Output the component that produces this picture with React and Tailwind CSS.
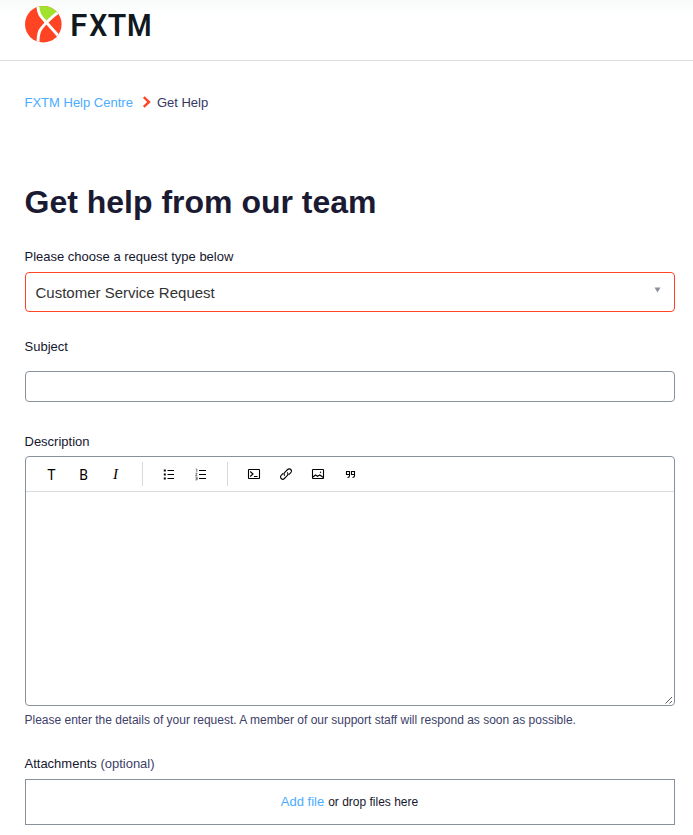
import React from "react";

function Logo() {
  return (
    <svg width="136" height="44" viewBox="0 0 136 44" className="block" role="img" aria-label="FXTM">
      <defs>
        <clipPath id="disc">
          <circle cx="18.3" cy="24.2" r="18.3" />
        </clipPath>
      </defs>
      <g clipPath="url(#disc)">
        <rect width="37" height="44" fill="#ff4423" />
        <path d="M13 4 C13 13 16 17 22 22 C25 18 29 15 34 13.5 L30 4 Z" fill="#a0e22d" />
        <path d="M12.8 4 C12.8 14 15.5 16.5 21.5 22.5 L33.5 36" fill="none" stroke="#fff" strokeWidth="2.9" />
        <path d="M35.5 11 C29.5 14.5 25 19 21.5 22.5 C15.5 29 13 30 13 44" fill="none" stroke="#fff" strokeWidth="2.9" />
      </g>
      <g fontSize="31.5" fontWeight="600" fill="#101820" className="font-['Roboto',sans-serif]">
        <text x="45.3" y="35.5" textLength="17" lengthAdjust="spacingAndGlyphs">F</text>
        <text x="64.3" y="35.5" textLength="18" lengthAdjust="spacingAndGlyphs">X</text>
        <text x="82.8" y="35.5" textLength="18.5" lengthAdjust="spacingAndGlyphs">T</text>
        <text x="102" y="35.5" textLength="24.6" lengthAdjust="spacingAndGlyphs">M</text>
      </g>
    </svg>
  );
}

function ToolButton({ children }) {
  return <button className="flex h-8 w-8 shrink-0 items-center justify-center text-black">{children}</button>;
}

function Glyph({ children }) {
  return (
    <svg width="16" height="16" viewBox="0 0 16 16" fill="none" stroke="currentColor" strokeWidth="1.1">
      {children}
    </svg>
  );
}

function Toolbar() {
  return (
    <div className="flex h-[35px] shrink-0 items-center border-b border-[#d8dcde] pl-[10px]">
      <ToolButton><span className="pr-px pt-[2px] font-['Roboto',sans-serif] text-[14px]">T</span></ToolButton>
      <ToolButton><span className="pr-px pt-[2px] font-['Roboto',sans-serif] text-[14px]">B</span></ToolButton>
      <ToolButton><span className="pr-px pt-px font-['Liberation_Serif',serif] text-[15px] italic">I</span></ToolButton>
      <div className="ml-[10px] mr-[10px] h-6 w-px bg-[#d8dcde]" />
      <ToolButton>
        <Glyph>
          <path d="M6.5 4.5H13M6.5 8.5H13M6.5 12.5H13" />
          <path d="M2.8 4.5h2M2.8 8.5h2M2.8 12.5h2" strokeWidth="1.9" />
        </Glyph>
      </ToolButton>
      <ToolButton>
        <Glyph>
          <path d="M6 4.5h7M6 8.5h7M6 12.5h7" />
          <path d="M2.8 3h1v3M2.4 7.2h1.8L2.5 9.7h2M2.4 11.2h1.8v2.7H2.4M2.8 12.6h1.4" strokeWidth=".5" />
        </Glyph>
      </ToolButton>
      <div className="ml-[10px] mr-[10px] h-6 w-px bg-[#d8dcde]" />
      <ToolButton>
        <Glyph>
          <rect x="2.5" y="3.5" width="11" height="9" rx=".5" />
          <path d="M4.2 5.5 7 8l-2.8 2.5M8 10.5h3.5" />
        </Glyph>
      </ToolButton>
      <ToolButton>
        <Glyph>
          <path d="M6.8 9.7a2.4 2.4 0 0 1 0-3.4l2.8-2.8a2.2 2.2 0 0 1 3.2 3.2l-2.2 2.2" />
          <path d="M9.2 6.3a2.4 2.4 0 0 1 0 3.4l-2.8 2.8a2.2 2.2 0 0 1-3.2-3.2l2.2-2.2" />
        </Glyph>
      </ToolButton>
      <ToolButton>
        <Glyph>
          <rect x="2.5" y="3.5" width="11" height="9" rx=".5" />
          <path d="m3 11 2.5-2 2 1.3L9.8 9l3.2 2.3" />
          <circle cx="10.5" cy="6.3" r=".7" fill="currentColor" stroke="none" />
        </Glyph>
      </ToolButton>
      <ToolButton>
        <Glyph>
          <path d="M7.5 8.5H4.5v-3h3v4.3q0 1.7-2 1.7M12.5 8.5h-3v-3h3v4.3q0 1.7-2 1.7" />
        </Glyph>
      </ToolButton>
    </div>
  );
}

export default function App() {
  return (
    <div className="h-[835px] w-full overflow-hidden bg-white font-['Liberation_Sans',Arial,sans-serif] text-[13px] text-[#15172e]">
      <header className="h-[61px] border-b border-[#dddddd] bg-linear-to-b from-[#f8fbfb] to-white to-25% pl-[25px]">
        <Logo />
      </header>
      <main className="flex flex-col pl-[25px] pr-[18px]">
        <nav className="-ml-[0.5px] mt-[32px] flex h-5 items-center leading-5">
          <a className="text-[#4bacfe]">FXTM Help Centre</a>
          <svg width="9" height="12" viewBox="0 0 9 12" className="mb-[3px] ml-[9.5px] mr-[5.5px]">
            <path d="M1.8 1.2 7 6l-5.2 4.8" fill="none" stroke="#ff4423" strokeWidth="2.4" />
          </svg>
          <span className="text-[#36365f]">Get Help</span>
        </nav>
        <h1 className="-ml-[0.5px] mt-[69px] h-10 text-[32px] font-bold leading-10 text-[#1a1a33]">Get help from our team</h1>
        <label className="-ml-[0.5px] mt-[25px] h-5 leading-5">Please choose a request type below</label>
        <div className="mt-[5px] flex h-10 items-center justify-between rounded-[4px] border border-[#ff4423] pl-[9.5px] pr-[13px]">
          <span className="pt-[2px] text-[15px] text-[#333333]">Customer Service Request</span>
          <svg width="7" height="6" viewBox="0 0 7 6" className="mb-[4px]">
            <path d="M.5.5h6L3.5 5.5z" fill="#8c929c" />
          </svg>
        </div>
        <label className="-ml-[0.5px] mt-[25px] h-5 leading-5">Subject</label>
        <input className="mt-[14px] h-[31px] rounded-[4px] border border-[#87929d] outline-none" />
        <label className="-ml-[0.5px] mt-[30px] h-5 leading-5">Description</label>
        <div className="mt-[4px] flex h-[250px] flex-col rounded-[4px] border border-[#87929d]">
          <Toolbar />
          <div className="flex flex-1 items-end justify-end">
            <svg width="10" height="10" viewBox="0 0 10 10" fill="none" stroke="#555" strokeWidth="1">
              <path d="M1.5 8.5 8 2M5.5 8.5 8 6" />
            </svg>
          </div>
        </div>
        <p className="-ml-[0.5px] mt-[4px] h-5 whitespace-nowrap text-[12px] leading-5 text-[#3e4068]">
          Please enter the details of your request. A member of our support staff will respond as soon as possible.
        </p>
        <label className="-ml-[0.5px] mt-[24px] h-5 leading-5">
          Attachments <span className="text-[#3e4068]">(optional)</span>
        </label>
        <div className="mt-[5px] flex h-[46px] items-center justify-center gap-1 border border-[#87929d] pr-px">
          <a className="text-[#4bacfe]">Add file</a>
          <span className="text-[12px]">or drop files here</span>
        </div>
      </main>
    </div>
  );
}
